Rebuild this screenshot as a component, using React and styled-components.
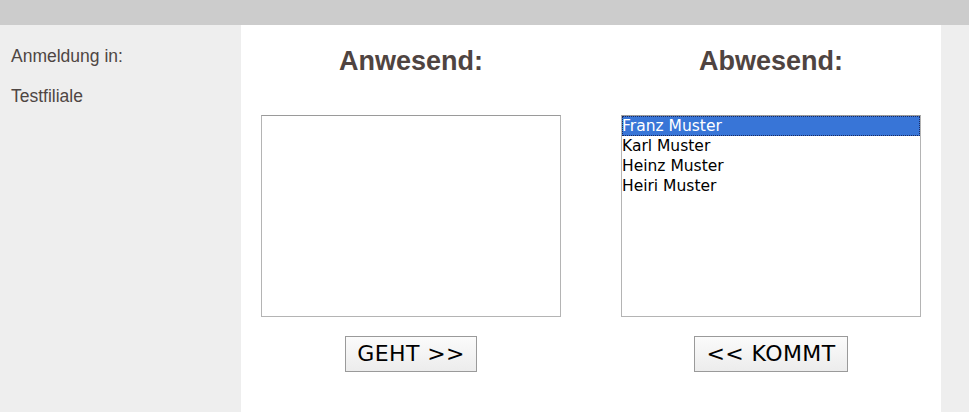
import React from "react";
import styled, { createGlobalStyle } from "styled-components";

const Global = createGlobalStyle`
  html, body { margin: 0; padding: 0; background: #fff; }
  body { font-family: "Liberation Sans", Arial, sans-serif; }
`;

const Page = styled.div`
  display: flex;
  flex-direction: column;
  height: 412px;
  overflow: hidden;
`;

const TopBar = styled.div`
  height: 25px;
  background: #cccccc;
  flex: none;
`;

const Body = styled.div`
  display: flex;
  flex: 1;
`;

const Sidebar = styled.aside`
  width: 241px;
  flex: none;
  background: #eeeeee;
  padding: 21px 0 0 11px;
  box-sizing: border-box;
`;

const SideText = styled.p`
  margin: 0 0 20px;
  font-size: 17.5px;
  line-height: 20px;
  color: #4e4643;
`;

const Main = styled.main`
  width: 700px;
  flex: none;
  background: #fff;
  padding: 0 20px;
  box-sizing: border-box;
  display: grid;
  grid-template-columns: 300px 300px;
  column-gap: 60px;
  align-content: start;
`;

const Column = styled.section`
  display: flex;
  flex-direction: column;
  align-items: center;
`;

const Heading = styled.h2`
  margin: 20px 0 38px;
  font-size: 27px;
  line-height: 32px;
  font-weight: bold;
  color: #4f4441;
`;

const ListBox = styled.div`
  width: 300px;
  height: 202px;
  box-sizing: border-box;
  border: 1px solid #b4b4b4;
  border-top-color: #9a9a9a;
  background: #fff;
  overflow: hidden;
`;

const Option = styled.div`
  height: 20px;
  line-height: 20px;
  font-family: "DejaVu Sans", Verdana, sans-serif;
  font-size: 15.5px;
  color: ${(p) => (p.$selected ? "#fff" : "#000")};
  background: ${(p) => (p.$selected ? "#3875d7" : "transparent")};
  outline: ${(p) => (p.$selected ? "1px dotted #1a2a60" : "none")};
  outline-offset: -1px;
  padding-left: 0;
  white-space: nowrap;
`;

const Button = styled.button`
  margin-top: 19px;
  height: 36px;
  padding: 0 11px;
  border: 1px solid #9a9a9a;
  border-radius: 0;
  background: linear-gradient(#fbfbfb, #ececec);
  font-family: "DejaVu Sans", Verdana, sans-serif;
  font-size: 22px;
  line-height: 34px;
  letter-spacing: 0.4px;
  color: #000;
  cursor: pointer;
`;

const RightStrip = styled.div`
  flex: 1;
  background: #eeeeee;
`;

const absent = ["Franz Muster", "Karl Muster", "Heinz Muster", "Heiri Muster"];

export default function App() {
  return (
    <Page>
      <Global />
      <TopBar />
      <Body>
        <Sidebar>
          <SideText>Anmeldung in:</SideText>
          <SideText>Testfiliale</SideText>
        </Sidebar>
        <Main>
          <Column>
            <Heading>Anwesend:</Heading>
            <ListBox role="listbox" />
            <Button>GEHT &gt;&gt;</Button>
          </Column>
          <Column>
            <Heading>Abwesend:</Heading>
            <ListBox role="listbox">
              {absent.map((n, i) => (
                <Option key={n} role="option" $selected={i === 0}>
                  {n}
                </Option>
              ))}
            </ListBox>
            <Button>&lt;&lt; KOMMT</Button>
          </Column>
        </Main>
        <RightStrip />
      </Body>
    </Page>
  );
}
